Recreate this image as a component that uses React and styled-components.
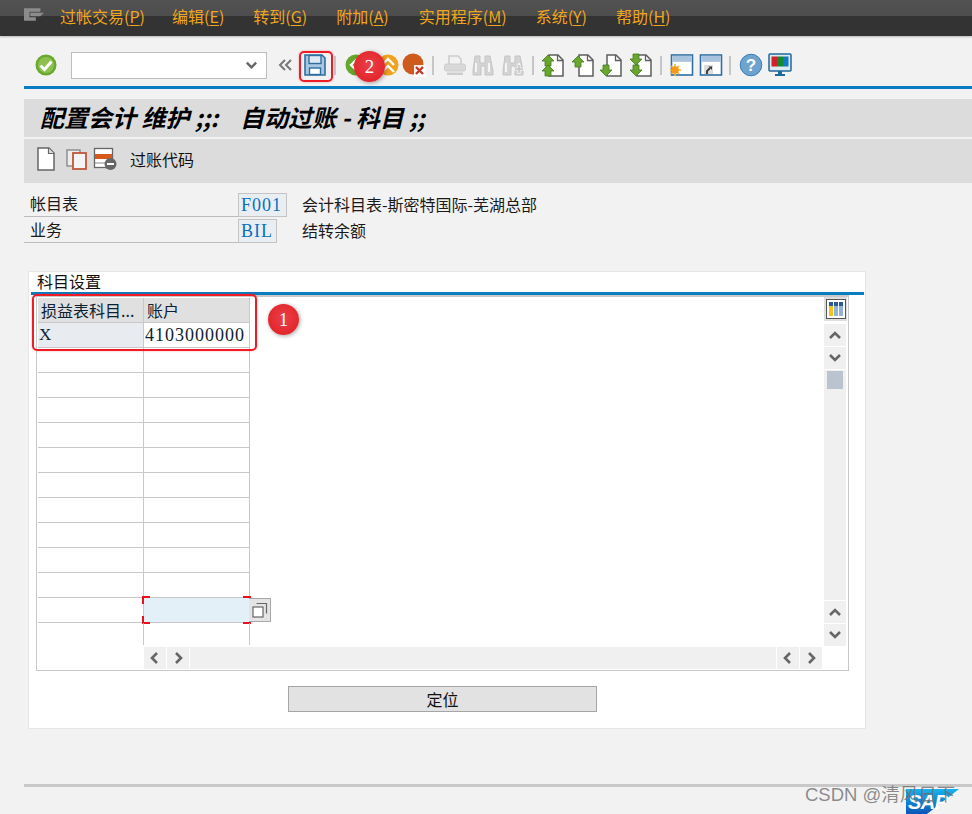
import React from "react";
import styled, { createGlobalStyle } from "styled-components";

const GlobalStyle = createGlobalStyle`
  html, body {
    margin: 0;
    padding: 0;
    background: #f2f2f2;
  }
  * {
    box-sizing: border-box;
  }
`;

const CJK = `"Noto Sans CJK SC", "Liberation Sans", sans-serif`;
const SERIF = `"Liberation Serif", "Noto Sans CJK SC", serif`;

const Page = styled.div`
  position: relative;
  width: 972px;
  height: 814px;
  overflow: hidden;
  background: #f2f2f2;
  font-family: ${CJK};
  font-size: 16px;
  color: #1a1a1a;
`;

const MenuBar = styled.div`
  display: flex;
  align-items: center;
  height: 36px;
  padding-left: 24px;
  background: linear-gradient(#525252 0, #4d4d4d 16px, #333333 16px, #333333 100%);
  box-shadow: 0 1px 2px rgba(0, 0, 0, 0.25);
`;
const MenuIcon = styled.svg`
  flex: none;
  margin-bottom: 7px;
`;
const MenuItem = styled.span`
  position: relative;
  top: -2px;
  margin-left: ${(p) => p.$ml}px;
  color: #f0a51e;
  line-height: 36px;
  white-space: nowrap;
  u {
    text-underline-offset: 2px;
  }
`;

const ToolRow = styled.div`
  display: flex;
  align-items: center;
  height: 50px;
  padding: 8px 0 0 34px;
`;
const Slot = styled.span`
  display: flex;
  flex: none;
  width: 24px;
  height: 24px;
  margin-left: ${(p) => p.$ml || 0}px;
`;
const Sep = styled.span`
  flex: none;
  width: 2px;
  height: 19px;
  margin-left: ${(p) => p.$ml}px;
  background: #c6c6c6;
`;
const Combo = styled.div`
  display: flex;
  align-items: center;
  justify-content: flex-end;
  flex: none;
  width: 196px;
  height: 27px;
  margin-left: 13px;
  padding-right: 8px;
  background: #fff;
  border: 1px solid #bdbdbd;
`;
const DoubleLeft = styled.span`
  display: flex;
  flex: none;
  width: 14px;
  margin-left: 11px;
`;
const BlueRule = styled.div`
  height: 3px;
  margin-left: ${(p) => p.$ml || 24}px;
  background: #0a7cc1;
`;
const TitleBar = styled.div`
  display: flex;
  align-items: center;
  height: 38px;
  margin: 10px 0 0 24px;
  padding: 0 0 3px 16px;
  background: #dcdcdc;
  color: #000;
  font-size: 24px;
  font-weight: 700;
  font-style: italic;
  white-space: pre;
`;
const AppBar = styled.div`
  display: flex;
  align-items: center;
  height: 44px;
  margin: 2px 0 0 24px;
  padding: 0 0 4px 10px;
  background: #dcdcdc;
`;
const AppLabel = styled.span`
  margin-left: 13px;
  color: #111;
`;

const FieldList = styled.div`
  display: flex;
  flex-direction: column;
  gap: 2px;
  margin: 10px 0 0 24px;
  height: 78px;
`;
const FieldRow = styled.div`
  display: flex;
  align-items: center;
  height: 24px;
`;
const FieldLabel = styled.div`
  width: 214px;
  height: 24px;
  padding-left: 6px;
  line-height: 21px;
  border-bottom: 1px solid #bcbcbc;
`;
const FieldValue = styled.div`
  width: ${(p) => p.$w}px;
  height: 24px;
  padding-left: 2px;
  background: #e9eef2;
  border: 1px solid #c4c4c4;
  color: #0a6fc2;
  font-family: ${SERIF};
  font-size: 18px;
  letter-spacing: 1px;
  line-height: 22px;
`;
const FieldText = styled.span`
  position: relative;
  top: -1px;
  margin-left: ${(p) => p.$ml}px;
  white-space: nowrap;
`;

const Panel = styled.section`
  width: 838px;
  height: 458px;
  margin-left: 28px;
  padding: 0 1px;
  background: #fff;
  border: 1px solid #e6e6e6;
`;
const TabLabel = styled.div`
  height: 20px;
  padding-left: 7px;
  line-height: 18px;
  color: #111;
`;
const TableBox = styled.div`
  display: flex;
  width: 813px;
  height: 376px;
  margin: 0 0 0 6px;
  background: #fff;
  border: 1px solid #c8c8c8;
  border-top-width: 2px;
`;
const TableArea = styled.div`
  display: flex;
  flex-direction: column;
  width: 787px;
`;
const Grid = styled.div`
  flex: none;
  height: 349px;
  padding: 1px 0 0 1px;
`;
const Row = styled.div`
  display: flex;
  height: ${(p) => p.$h || 25}px;
  background: ${(p) => (p.$head ? "#e0e0e0" : "transparent")};
  width: 212px;
  border-bottom: ${(p) => (p.$last ? "none" : "1px solid #c8c8c8")};
`;
const Cell = styled.div`
  position: relative;
  width: 106px;
  padding-left: ${(p) => (p.$serif ? 1 : 3)}px;
  border-right: 1px solid #c8c8c8;
  background: ${(p) => p.$bg || "transparent"};
  font-family: ${(p) => (p.$serif ? SERIF : CJK)};
  font-size: ${(p) => p.$size || 16}px;
  letter-spacing: ${(p) => (p.$serif ? 1 : 0)}px;
  line-height: 24px;
  color: #0b2233;
  white-space: nowrap;
`;
const Corner = styled.i`
  position: absolute;
  width: 8px;
  height: 8px;
  ${(p) => (p.$top ? "top: -2px" : "bottom: -2px")};
  ${(p) => (p.$left ? "left: -2px" : "right: -2px")};
  border-color: #e8101a;
  border-style: solid;
  border-width: ${(p) => (p.$top ? "2px" : 0)} ${(p) => (p.$left ? 0 : "2px")} ${(p) => (p.$top ? 0 : "2px")} ${(p) => (p.$left ? "2px" : 0)};
`;
const ValueHelp = styled.div`
  position: absolute;
  top: 0;
  left: 105px;
  display: flex;
  align-items: center;
  justify-content: center;
  width: 22px;
  height: 24px;
  background: #e4e4e4;
  border: 1px solid #a8a8a8;
  border-left: none;
`;
const HScroll = styled.div`
  display: flex;
  gap: 1px;
  height: 22px;
  padding-left: 107px;
  margin-top: 1px;
`;
const VScroll = styled.div`
  display: flex;
  flex-direction: column;
  gap: 1px;
  width: 22px;
`;
const ScrollBtn = styled.div`
  display: flex;
  align-items: center;
  justify-content: center;
  flex: none;
  width: 22px;
  height: 22px;
  background: #f0f0f0;
`;
const ColumnBtn = styled.div`
  display: flex;
  align-items: center;
  justify-content: center;
  flex: none;
  width: 23px;
  height: 24px;
  margin-bottom: 2px;
  background: #dedede;
`;
const VTrack = styled.div`
  flex: none;
  height: 230px;
  padding: 1px 3px;
  background: #f0f0f0;
`;
const Thumb = styled.div`
  height: 18px;
  background: #b9c4cf;
`;
const HTrack = styled.div`
  flex: none;
  width: 586px;
  height: 22px;
  background: #f0f0f0;
`;
const PositionRow = styled.div`
  display: flex;
  margin: 15px 0 0 258px;
`;
const PositionBtn = styled.button`
  width: 309px;
  height: 26px;
  padding: 0;
  background: #e2e2e2;
  border: 1px solid #a5a5a5;
  color: #111;
  font-family: ${CJK};
  font-size: 16px;
  line-height: 24px;
`;
const BottomRule = styled.div`
  height: 3px;
  margin: 55px 0 0 24px;
  background: #c8c8c8;
`;

const Highlight = styled.div`
  position: absolute;
  left: ${(p) => p.$x}px;
  top: ${(p) => p.$y}px;
  width: ${(p) => p.$w}px;
  height: ${(p) => p.$h}px;
  border: 2px solid #ee1c25;
  border-radius: 5px;
  box-shadow: 0 0 2px rgba(238, 28, 37, 0.45);
`;
const Badge = styled.div`
  position: absolute;
  left: ${(p) => p.$x}px;
  top: ${(p) => p.$y}px;
  display: flex;
  align-items: center;
  justify-content: center;
  width: 31px;
  height: 31px;
  background: radial-gradient(circle at 50% 45%, #e8414a 0, #e4282f 65%, #d91f27 100%);
  border-radius: 50%;
  box-shadow: 1px 1px 4px rgba(0, 0, 0, 0.35);
  color: #fff;
  font-family: "Liberation Serif", serif;
  font-size: 19px;
`;
const Logo = styled.div`
  position: absolute;
  left: 906px;
  top: 788px;
  width: 54px;
  height: 26px;
`;
const LogoText = styled.span`
  position: absolute;
  left: 2px;
  top: 3px;
  color: #fff;
  font-family: "Liberation Sans", sans-serif;
  font-size: 20px;
  font-weight: 700;
  font-style: italic;
  line-height: 22px;
  letter-spacing: -0.5px;
`;
const Watermark = styled.div`
  position: absolute;
  left: 805px;
  top: 783px;
  color: rgba(110, 110, 110, 0.78);
  font-family: "Liberation Sans", "Noto Sans CJK SC", sans-serif;
  font-size: 18.5px;
  line-height: 24px;
  white-space: nowrap;
`;

const Svg = ({ children, size = 24 }) => (
  <svg width={size} height={size} viewBox="0 0 24 24" fill="none">
    {children}
  </svg>
);

const CheckIcon = () => (
  <Svg>
    <circle cx="12" cy="12" r="10.5" fill="#6aa82e" />
    <circle cx="12" cy="12" r="8" fill="#8dc04e" />
    <path d="M6.5 12.5l4 4 7-8" stroke="#fff" strokeWidth="3" />
  </Svg>
);
const SaveIcon = () => (
  <Svg>
    <path d="M2 2h17l3 3v17H2z" fill="#a9c7e2" stroke="#2f6f9f" strokeWidth="1.6" />
    <rect x="6" y="2.5" width="12" height="8" fill="#dfe9f2" stroke="#2f6f9f" strokeWidth="1.4" />
    <rect x="6.5" y="15" width="11" height="6.5" fill="#fff" stroke="#2f6f9f" strokeWidth="1.4" />
  </Svg>
);
const BackIcon = () => (
  <Svg>
    <circle cx="12" cy="12" r="10.5" fill="#65a62b" />
    <path d="M13 6l-6 6 6 6M19 6l-6 6 6 6" stroke="#fff" strokeWidth="2.4" />
  </Svg>
);
const ExitIcon = () => (
  <Svg>
    <circle cx="12" cy="12" r="10.5" fill="#f0a21c" />
    <path d="M6 12l6-6 6 6M6 19l6-6 6 6" stroke="#fff" strokeWidth="2.4" />
  </Svg>
);
const CancelIcon = () => (
  <Svg>
    <circle cx="11" cy="11" r="10.5" fill="#cf5a1e" />
    <path d="M12 12h12v12H12z" fill="#fff" opacity="0.9" />
    <path d="M14 14l7 7M21 14l-7 7" stroke="#c0392b" strokeWidth="2.4" />
  </Svg>
);
const PrintIcon = () => (
  <Svg>
    <path d="M6 3h9l3 3v6H6z" fill="#f2f2f2" stroke="#cdcdcd" strokeWidth="1.6" />
    <rect x="1.5" y="11" width="21" height="7" rx="2" fill="#d8d8d8" stroke="#cdcdcd" />
    <rect x="4" y="19.5" width="16" height="2.5" fill="#cdcdcd" />
  </Svg>
);
const FindIcon = ({ plus }) => (
  <Svg>
    <path d="M4 3h5v7h5V3h5l3 15v4h-8v-9h-4v9H2v-4z" fill="#d4d4d4" stroke="#c4c4c4" />
    <path d="M5 10v9M18 10v9" stroke="#f4f4f4" strokeWidth="2" />
    {plus && <path d="M18 11v10M13 16h10" stroke="#f4f4f4" strokeWidth="3" />}
    {plus && <path d="M18 12v8M14 16h8" stroke="#c4c4c4" strokeWidth="1.5" />}
  </Svg>
);
const Page0 = () => <path d="M8 2h9l5 5v16H8z" fill="#fff" stroke="#5e5e5e" strokeWidth="1.5" />;
const Fold = () => <path d="M16.5 2v5.5H22" stroke="#5e5e5e" strokeWidth="1.3" />;
const UpArrow = ({ x, y }) => <path d={`M${x} ${y}l6-6 6 6h-3v5h-6v-5z`} fill="#6aa52e" stroke="#3f7d1c" strokeWidth="0.8" />;
const DownArrow = ({ x, y }) => <path d={`M${x} ${y}l6 6 6-6h-3v-5h-6v5z`} fill="#6aa52e" stroke="#3f7d1c" strokeWidth="0.8" />;
const FirstIcon = () => (
  <Svg><Page0 /><Fold /><UpArrow x={1} y={8} /><UpArrow x={1} y={18} /></Svg>
);
const PrevIcon = () => (
  <Svg><Page0 /><Fold /><UpArrow x={1} y={9} /></Svg>
);
const NextIcon = () => (
  <Svg><Page0 /><Fold /><DownArrow x={1} y={17} /></Svg>
);
const LastIcon = () => (
  <Svg><Page0 /><Fold /><DownArrow x={1} y={6} /><DownArrow x={1} y={17} /></Svg>
);
const WindowBase = () => (
  <>
    <rect x="1.5" y="2" width="21" height="20" fill="#fff" stroke="#2f6f9f" strokeWidth="1.6" />
    <rect x="2.3" y="2.8" width="19.4" height="6" fill="#a9c3de" />
  </>
);
const NewWindowIcon = () => (
  <Svg>
    <WindowBase />
    <path d="M5 11v12M-1 17h12M1 13l8 8M9 13l-8 8" stroke="#f7b040" strokeWidth="1.6" />
    <circle cx="5" cy="17" r="3.8" fill="#f79a13" />
  </Svg>
);
const ShortcutIcon = () => (
  <Svg>
    <WindowBase />
    <rect x="5" y="12" width="9" height="9" fill="#dcdcdc" />
    <path d="M8 21v-3l3-3" stroke="#333" strokeWidth="1.8" />
    <path d="M9.5 13.5h3.5v3.5z" fill="#333" />
  </Svg>
);
const HelpIcon = () => (
  <Svg>
    <circle cx="12" cy="12" r="10.8" fill="#6ea2cf" stroke="#3f7fb6" />
    <text x="12" y="18" textAnchor="middle" fill="#fff" fontFamily="Liberation Sans" fontWeight="700" fontSize="17">?</text>
  </Svg>
);
const MonitorIcon = () => (
  <Svg>
    <rect x="1" y="1" width="22" height="17" rx="1" fill="#dfe9f2" stroke="#1f6a9c" strokeWidth="1.5" />
    <rect x="3.5" y="3.5" width="5.5" height="10" fill="#d0202a" />
    <rect x="9" y="3.5" width="6" height="10" fill="#128a30" />
    <rect x="15" y="3.5" width="5.5" height="10" fill="#1277c4" />
    <path d="M10 18h4v3h3v2H7v-2h3z" fill="#1f6a9c" />
  </Svg>
);
const DocIcon = () => (
  <svg width="18" height="24" viewBox="0 0 18 24" fill="none">
    <path d="M1 1h11l5 5v17H1z" fill="#fff" stroke="#666" strokeWidth="1.5" />
    <path d="M11.5 1v5.5H17" fill="#dcdcdc" stroke="#666" strokeWidth="1.2" />
  </svg>
);
const CopyIcon = () => (
  <Svg>
    <rect x="2" y="3" width="13" height="16" fill="#eee" stroke="#8a8a8a" strokeWidth="1.4" />
    <rect x="8" y="6" width="13" height="16" fill="#f4f4f4" stroke="#c0573a" strokeWidth="1.8" />
  </Svg>
);
const DeleteRowIcon = () => (
  <Svg>
    <rect x="1.5" y="1.5" width="18" height="19" fill="#fff" stroke="#666" strokeWidth="1.3" />
    <rect x="2" y="7" width="17" height="5" fill="#d9591c" />
    <path d="M2 16h17" stroke="#888" />
    <circle cx="17.5" cy="17" r="6" fill="#666" />
    <path d="M14 17h7" stroke="#fff" strokeWidth="2" />
  </Svg>
);
const ArrowGlyph = ({ d, size = 14 }) => (
  <svg width={size} height={size} viewBox="0 0 14 14" fill="none">
    <path d={d} stroke="#666" strokeWidth="2.6" />
  </svg>
);
const ColumnsIcon = () => (
  <svg width="20" height="20" viewBox="0 0 20 20" fill="none">
    <rect x="0.5" y="0.5" width="19" height="19" fill="#fff" stroke="#555" />
    <rect x="3" y="3" width="4" height="14" fill="#f6c21c" />
    <rect x="8" y="3" width="4" height="14" fill="#8fb4d8" />
    <rect x="13" y="3" width="4" height="14" fill="#8fb4d8" />
    <path d="M3 5h14" stroke="#2b5a9a" strokeWidth="4" strokeDasharray="4 1" />
  </svg>
);
const ValueHelpIcon = () => (
  <svg width="16" height="16" viewBox="0 0 16 16" fill="none">
    <path d="M4.5 1.5h10v10" stroke="#666" strokeWidth="1.2" />
    <rect x="1" y="5" width="10" height="10" fill="#fff" stroke="#666" strokeWidth="1.2" />
  </svg>
);
const LogoShape = () => (
  <svg width="54" height="26" viewBox="0 0 54 26">
    <defs>
      <linearGradient id="sapFill" x1="0" y1="0" x2="0" y2="1">
        <stop offset="0" stopColor="#19b2ee" />
        <stop offset="1" stopColor="#0a55b8" />
      </linearGradient>
    </defs>
    <path d="M0 1h53L21 26H0z" fill="url(#sapFill)" />
  </svg>
);

const UP = "M2 10l5-5 5 5";
const DOWN = "M2 4l5 5 5-5";
const LEFT = "M9 2L4 7l5 5";
const RIGHT = "M5 2l5 5-5 5";

const menus = [
  { label: "过帐交易", key: "P", ml: 16 },
  { label: "编辑", key: "E", ml: 27 },
  { label: "转到", key: "G", ml: 29 },
  { label: "附加", key: "A", ml: 29 },
  { label: "实用程序", key: "M", ml: 30 },
  { label: "系统", key: "Y", ml: 29 },
  { label: "帮助", key: "H", ml: 29 },
];

const blankRows = Array.from({ length: 10 }, (_, i) => i);

export default function App() {
  return (
    <Page>
      <GlobalStyle />
      <MenuBar>
        <MenuIcon width="20" height="13" viewBox="0 0 22 14">
          <path d="M0 0h18v4H6v6h7v4H0z" fill="#8c8c8c" />
          <path d="M7 5h15l-4 4H7z" fill="#8c8c8c" />
        </MenuIcon>
        {menus.map((m) => (
          <MenuItem key={m.key} $ml={m.ml}>
            {m.label}(<u>{m.key}</u>)
          </MenuItem>
        ))}
      </MenuBar>

      <ToolRow>
        <Slot><CheckIcon /></Slot>
        <Combo>
          <ArrowGlyph d={DOWN} size={13} />
        </Combo>
        <DoubleLeft>
          <svg width="14" height="14" viewBox="0 0 14 14" fill="none">
            <path d="M7 2L2 7l5 5M13 2L8 7l5 5" stroke="#777" strokeWidth="2" />
          </svg>
        </DoubleLeft>
        <Slot $ml={11}><SaveIcon /></Slot>
        <Sep $ml={7} />
        <Slot $ml={8}><BackIcon /></Slot>
        <Slot $ml={8}><ExitIcon /></Slot>
        <Slot $ml={2}><CancelIcon /></Slot>
        <Sep $ml={6} />
        <Slot $ml={9}><PrintIcon /></Slot>
        <Slot $ml={4}><FindIcon /></Slot>
        <Slot $ml={6}><FindIcon plus /></Slot>
        <Sep $ml={7} />
        <Slot $ml={7}><FirstIcon /></Slot>
        <Slot $ml={6}><PrevIcon /></Slot>
        <Slot $ml={4}><NextIcon /></Slot>
        <Slot $ml={6}><LastIcon /></Slot>
        <Sep $ml={7} />
        <Slot $ml={8}><NewWindowIcon /></Slot>
        <Slot $ml={5}><ShortcutIcon /></Slot>
        <Sep $ml={6} />
        <Slot $ml={8}><HelpIcon /></Slot>
        <Slot $ml={5}><MonitorIcon /></Slot>
      </ToolRow>
      <BlueRule />

      <TitleBar>配置会计 维护 ;;:    自动过账 - 科目 ;;</TitleBar>
      <AppBar>
        <Slot $ml={3}><DocIcon /></Slot>
        <Slot $ml={4}><CopyIcon /></Slot>
        <Slot $ml={4}><DeleteRowIcon /></Slot>
        <AppLabel>过账代码</AppLabel>
      </AppBar>

      <FieldList>
        <FieldRow>
          <FieldLabel>帐目表</FieldLabel>
          <FieldValue $w={49}>F001</FieldValue>
          <FieldText $ml={15}>会计科目表-斯密特国际-芜湖总部</FieldText>
        </FieldRow>
        <FieldRow>
          <FieldLabel>业务</FieldLabel>
          <FieldValue $w={39}>BIL</FieldValue>
          <FieldText $ml={25}>结转余额</FieldText>
        </FieldRow>
      </FieldList>

      <Panel>
        <TabLabel>科目设置</TabLabel>
        <BlueRule $ml={1} />
        <TableBox>
          <TableArea>
            <Grid>
              <Row $head>
                <Cell>损益表科目...</Cell>
                <Cell>账户</Cell>
              </Row>
              <Row>
                <Cell $serif $size={17} $bg="#e8ebef">X</Cell>
                <Cell $serif $size={18} $bg="#fff">4103000000</Cell>
              </Row>
              {blankRows.map((i) => (
                <Row key={i}>
                  <Cell />
                  <Cell />
                </Row>
              ))}
              <Row>
                <Cell />
                <Cell $bg="#e3f0f8">
                  <Corner $top $left />
                  <Corner $top />
                  <Corner $left />
                  <Corner />
                  <ValueHelp>
                    <ValueHelpIcon />
                  </ValueHelp>
                </Cell>
              </Row>
              <Row $h={22} $last>
                <Cell />
                <Cell />
              </Row>
            </Grid>
            <HScroll>
              <ScrollBtn><ArrowGlyph d={LEFT} /></ScrollBtn>
              <ScrollBtn><ArrowGlyph d={RIGHT} /></ScrollBtn>
              <HTrack />
              <ScrollBtn><ArrowGlyph d={LEFT} /></ScrollBtn>
              <ScrollBtn><ArrowGlyph d={RIGHT} /></ScrollBtn>
            </HScroll>
          </TableArea>
          <VScroll>
            <ColumnBtn><ColumnsIcon /></ColumnBtn>
            <ScrollBtn><ArrowGlyph d={UP} /></ScrollBtn>
            <ScrollBtn><ArrowGlyph d={DOWN} /></ScrollBtn>
            <VTrack><Thumb /></VTrack>
            <ScrollBtn><ArrowGlyph d={UP} /></ScrollBtn>
            <ScrollBtn><ArrowGlyph d={DOWN} /></ScrollBtn>
          </VScroll>
        </TableBox>
        <PositionRow>
          <PositionBtn>定位</PositionBtn>
        </PositionRow>
      </Panel>
      <BottomRule />

      <Highlight $x={32} $y={294} $w={225} $h={57} />
      <Badge $x={268} $y={304}>1</Badge>
      <Highlight $x={299} $y={51} $w={34} $h={31} />
      <Badge $x={354} $y={51}>2</Badge>
      <Logo>
        <LogoShape />
        <LogoText>SAP</LogoText>
      </Logo>
      <Watermark>CSDN @清风日下</Watermark>
    </Page>
  );
}
